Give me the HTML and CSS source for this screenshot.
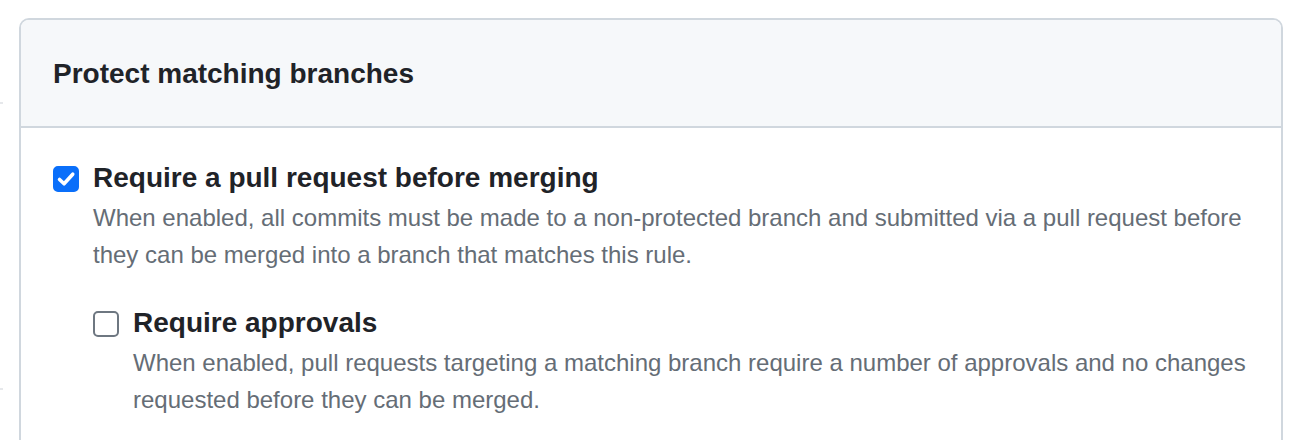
FILE: index.html
```html
<!DOCTYPE html>
<html>
<head>
<meta charset="utf-8">
<link rel="stylesheet" href="styles.css">
</head>
<body>
<div class="marks"><span class="mark m1"></span><span class="mark m2"></span></div>
<section class="box">
  <header class="box-header">
    <h2 class="box-title">Protect matching branches</h2>
  </header>
  <div class="box-body">
    <div class="option">
      <span class="check checked">
        <svg viewBox="0 0 16 16" width="22" height="22"><path d="M3.3 8.3 L6.6 11.5 L12.9 4.5" fill="none" stroke="#fff" stroke-width="2.6" stroke-linecap="round" stroke-linejoin="round"/></svg>
      </span>
      <div class="option-text">
        <div class="option-title">Require a pull request before merging</div>
        <p class="option-note">When enabled, all commits must be made to a non-protected branch and submitted via a pull request before they can be merged into a branch that matches this rule.</p>
        <div class="option nested">
          <span class="check"></span>
          <div class="option-text">
            <div class="option-title">Require approvals</div>
            <p class="option-note">When enabled, pull requests targeting a matching branch require a number of approvals and no changes requested before they can be merged.</p>
          </div>
        </div>
      </div>
    </div>
  </div>
</section>
</body>
</html>
```

FILE: styles.css
```css
html, body {
  margin: 0;
  padding: 0;
  background: #ffffff;
}
body {
  font-family: "Liberation Sans", Arial, sans-serif;
  color: #1f2328;
  position: relative;
  width: 1304px;
  height: 440px;
  overflow: hidden;
}
.marks {
  position: absolute;
  left: 0;
  top: 0;
}
.mark {
  position: absolute;
  left: 0;
  width: 3px;
  height: 2px;
  background: #e6e8eb;
}
.m1 { top: 102px; }
.m2 { top: 388px; }
.box {
  margin: 18px 0 0 19px;
  width: 1264px;
  border: 2px solid #d0d7de;
  border-radius: 10px;
  min-height: 460px;
  box-sizing: border-box;
}
.box-header {
  background: #f6f8fa;
  border-bottom: 2px solid #d0d7de;
  border-radius: 8px 8px 0 0;
  height: 108px;
  box-sizing: border-box;
  padding: 0 32px;
  display: flex;
  align-items: center;
}
.box-title {
  margin: 0;
  font-size: 28px;
  font-weight: 700;
  line-height: 1.25;
}
.box-body {
  padding: 30px 32px 0;
}
.option {
  display: flex;
  align-items: flex-start;
  gap: 14px;
}
.check {
  flex: 0 0 auto;
  width: 26px;
  height: 26px;
  box-sizing: border-box;
  border: 2px solid #6e7781;
  border-radius: 5px;
  margin-top: 8px;
  display: flex;
  align-items: center;
  justify-content: center;
  background: #fff;
}
.check.checked {
  background: #0a6ffa;
  border-color: #0a6ffa;
}
.option-title {
  font-size: 28px;
  font-weight: 700;
  line-height: 40px;
}
.option-note {
  margin: 1px 0 0;
  font-size: 24px;
  line-height: 37px;
  color: #656d76;
}
.nested {
  margin-top: 30px;
}
```
